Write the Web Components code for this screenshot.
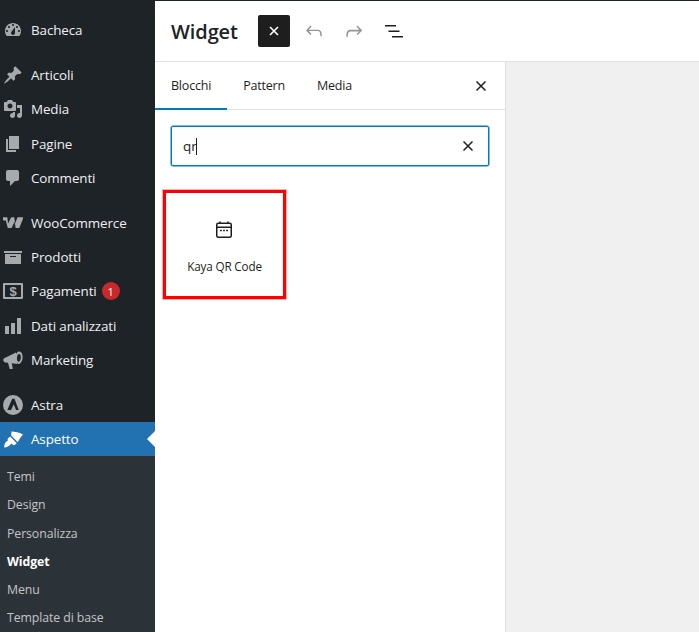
<!DOCTYPE html>
<html lang="it">
<head>
<meta charset="utf-8">
<title>Widget</title>
<style>
  html, body { margin: 0; height: 100%; overflow: hidden; }
  body { display: flex; height: 632px; font-family: "Open Sans", "Liberation Sans", sans-serif; }
</style>
</head>
<body>
<admin-menu>
  <menu-item icon="gauge" top>Bacheca</menu-item>
  <menu-item icon="pin" gap>Articoli</menu-item>
  <menu-item icon="media">Media</menu-item>
  <menu-item icon="page">Pagine</menu-item>
  <menu-item icon="comment">Commenti</menu-item>
  <menu-item icon="woo" gap>WooCommerce</menu-item>
  <menu-item icon="box">Prodotti</menu-item>
  <menu-item icon="money" badge="1">Pagamenti</menu-item>
  <menu-item icon="bars">Dati analizzati</menu-item>
  <menu-item icon="horn">Marketing</menu-item>
  <menu-item icon="astra" gap>Astra</menu-item>
  <menu-item icon="brush" current>Aspetto</menu-item>
  <sub-menu>
    <sub-item>Temi</sub-item>
    <sub-item>Design</sub-item>
    <sub-item>Personalizza</sub-item>
    <sub-item current>Widget</sub-item>
    <sub-item>Menu</sub-item>
    <sub-item>Template di base</sub-item>
  </sub-menu>
</admin-menu>
<widget-editor></widget-editor>

<script>
const icons = {
  gauge: `<path fill-rule="evenodd" d="M3.760 16h12.480c1.100-1.370 1.760-3.110 1.760-5 0-4.420-3.580-8-8-8s-8 3.580-8 8c0 1.890.660 3.630 1.760 5zM10 4c.550 0 1 .450 1 1s-.450 1-1 1-1-.450-1-1 .450-1 1-1zM6 6c.550 0 1 .450 1 1s-.450 1-1 1-1-.450-1-1 .450-1 1-1zm8 0c.550 0 1 .450 1 1s-.450 1-1 1-1-.450-1-1 .450-1 1-1zm-5.370 5.550L12 7v6c0 1.100-.900 2-2 2s-2-.900-2-2c0-.570.240-1.080.630-1.450zM4 10c.550 0 1 .450 1 1s-.450 1-1 1-1-.450-1-1 .450-1 1-1zm12 0c.550 0 1 .450 1 1s-.450 1-1 1-1-.450-1-1 .450-1 1-1z"/>`,
  pin: `<path d="M10.440 3.020l1.820-1.820 6.360 6.350-1.830 1.820c-1.050-.680-2.480-.570-3.410.360l-.750.750c-.920.930-1.040 2.350-.350 3.410l-1.830 1.820-2.410-2.410-2.800 2.790c-.420.420-3.380 2.710-3.800 2.290s1.860-3.390 2.280-3.810l2.790-2.790L4.100 9.360l1.830-1.820c1.050.690 2.480.570 3.400-.360l.750-.750c.930-.920 1.050-2.350.360-3.410z"/>`,
  media: `<path fill-rule="evenodd" d="M13 11V4c0-.550-.450-1-1-1h-1.670L9 1H5L3.670 3H2c-.550 0-1 .450-1 1v7c0 .550.450 1 1 1h10c.550 0 1-.450 1-1zM7 4.500c1.380 0 2.500 1.120 2.500 2.500S8.380 9.500 7 9.500 4.500 8.380 4.500 7 5.620 4.500 7 4.500z"/><path d="M14 6h5v10.500c0 1.380-1.120 2.500-2.500 2.500S14 17.880 14 16.500s1.120-2.500 2.500-2.500c.170 0 .340.020.5.050V9h-3V6zm-4 8.050V13h2v3.500c0 1.380-1.120 2.500-2.500 2.500S7 17.880 7 16.500 8.120 14 9.500 14c.170 0 .340.020.5.050z"/>`,
  page: `<path d="M6 15V2h10v13H6zm-1 1h8v2H3V5h2v11z"/>`,
  comment: `<path d="M5 2h9c1.100 0 2 .900 2 2v7c0 1.100-.900 2-2 2h-2l-5 5v-5H5c-1.100 0-2-.900-2-2V4c0-1.100.900-2 2-2z"/>`,
  woo: `<path d="M0 4.200h4.300l.8 6.300 3.100-6.300h3.100l.7 6.300 2.600-6.300h4.800c.8 0 .9.8.6 1.500l-3.700 9.300h-3.700l-1-6.200-3 6.200H4.800L2.900 7.700 0 7.300z"/>`,
  box: `<path fill-rule="evenodd" d="M19 4v2H1V4h18zM2 7h16v10H2V7zm11 3V9H7v1h6z"/>`,
  money: `<path fill-rule="evenodd" d="M1 2h18a1 1 0 0 1 1 1v14a1 1 0 0 1-1 1H1a1 1 0 0 1-1-1V3a1 1 0 0 1 1-1zM2 4v12h16V4z"/><text x="10" y="14.500" font-size="13" font-weight="700" text-anchor="middle" font-family="Liberation Sans, sans-serif">$</text>`,
  bars: `<path d="M18 18V2h-4v16h4zm-6 0V7H8v11h4zm-6 0v-8H2v8h4z"/>`,
  horn: `<path d="M1.200 8.200L13 2.500l1 11.500-5.200-.8 1 5.800H6.700L5 12.800l-2.600-.3a2.400 2.400 0 0 1-1.200-4.300z"/><path fill-rule="evenodd" d="M16.500 1.500c2.300.3 3.400 3.200 3.100 6.600-.3 3.400-2 6.100-4.200 5.800-2.300-.3-3.400-3.200-3.100-6.600.3-3.400 2-6.100 4.200-5.800zM16.200 4c-1.100-.1-2 1.600-2.200 3.700-.2 2.100.5 3.900 1.600 4 1.100.1 2-1.600 2.200-3.700.2-2.100-.5-3.900-1.600-4z"/>`,
  astra: `<path fill-rule="evenodd" d="M10 0a10 10 0 1 0 0 20 10 10 0 0 0 0-20zM9.200 3.800h2.300l4.200 11.200h-2.600l-2.300-5.700L8 15H4.300z"/>`,
  brush: `<path d="M8.500 2.500c3.500.4 7.500.6 11.500 3-2.500 2.500-3.800 5-5.200 7.800L8.200 6.600zM7.200 7.600l6.500 6.600-1.700 1.600c-.8.600-1.700.3-2.300-.3l-1.200-.9-2 2c-1.500 1.500-3.700 2-5.500 1.700l1-4.300 2.900-2.800c-.4-.8-.4-1.300.2-2z"/>`
};

class AdminMenu extends HTMLElement {
  constructor() {
    super();
    this.attachShadow({ mode: "open" }).innerHTML = `<style>
      :host { display: flex; flex-direction: column; width: 155px; flex: none; height: 632px;
        background: #1d2327; overflow: hidden; }
    </style><slot></slot>`;
  }
}

class MenuItem extends HTMLElement {
  constructor() {
    super();
    const badge = this.getAttribute("badge");
    const name = this.getAttribute("icon");
    this.attachShadow({ mode: "open" }).innerHTML = `<style>
      :host { display: flex; align-items: center; height: 34.250px; flex: none; position: relative;
        color: #f0f0f1; font-size: 13.400px; letter-spacing: -.1px; }
      :host([gap]) { margin-top: 10.750px; }
      :host([top]) { margin-top: 13px; }
      :host([current]) { background: #2271b1; color: #fff; }
      :host([current])::after { content: ""; position: absolute; right: 0; top: 50%; margin-top: -8px;
        border: 8px solid transparent; border-right-color: #fff; border-left-width: 0; }
      svg { width: 20px; height: 20px; margin-left: 3px; margin-right: 8px; flex: none; fill: #a7aaad; }
      :host([current]) svg { fill: #fff; }
      .badge { margin-left: 5px; width: 18px; height: 18px; border-radius: 50%; background: #c9282d;
        color: #fff; font-size: 11px; display: flex; align-items: center; justify-content: center; letter-spacing: 0; }
    </style>
    <svg viewBox="0 0 20 20">${icons[name]}</svg><slot></slot>
    ${badge ? `<span class="badge">${badge}</span>` : ""}`;
  }
}

class SubMenu extends HTMLElement {
  constructor() {
    super();
    this.attachShadow({ mode: "open" }).innerHTML = `<style>
      :host { display: flex; flex-direction: column; flex: 1; background: #2c3338; padding-top: 6.300px; }
    </style><slot></slot>`;
  }
}

class SubItem extends HTMLElement {
  constructor() {
    super();
    this.attachShadow({ mode: "open" }).innerHTML = `<style>
      :host { display: flex; align-items: center; height: 28.200px; flex: none; padding-left: 7px;
        color: #c3c4c7; font-size: 12.300px; letter-spacing: -.08px; }
      :host([current]) { color: #fff; font-weight: 700; }
    </style><slot></slot>`;
  }
}

class WidgetEditor extends HTMLElement {
  constructor() {
    super();
    this.attachShadow({ mode: "open" }).innerHTML = `<style>
      :host { display: flex; flex-direction: column; flex: 1; min-width: 0; background: #fff;
        border-top: 1px solid #1d2327; color: #1e1e1e; }
      header { display: flex; align-items: center; height: 60px; flex: none; padding-left: 16px;
        border-bottom: 1px solid #e0e0e0; }
      h1 { margin: 0; width: 87px; flex: none; font-size: 20px; font-weight: 600; letter-spacing: -.1px; color: #1d2327; }
      .close { width: 32px; height: 32px; background: #1e1e1e; border-radius: 2px; display: flex;
        align-items: center; justify-content: center; }
      header svg.t { width: 24px; height: 24px; margin-left: 16px; flex: none; }
      header svg.undo { margin-left: 12px; }
      header svg.list { margin-left: 16px; }
      .body { flex: 1; display: flex; min-height: 0; }
      .panel { width: 350px; flex: none; border-right: 1px solid #e0e0e0; box-sizing: content-box; }
      .canvas { flex: 1; background: #f0f0f0; }
      nav { display: flex; height: 47px; border-bottom: 1px solid #e0e0e0; align-items: center; position: relative;
        font-size: 12.500px; letter-spacing: -.2px; padding-left: 16px; gap: 32px; }
      nav span { position: relative; }
      nav .x { position: absolute; right: 12px; top: 12px; width: 24px; height: 24px; }
      nav i { position: absolute; left: 0; bottom: -1px; width: 72px; height: 2px; background: #007cba; }
      .search { margin: 16px 16px 0 16px; height: 38px; border: 1px solid #007cba; border-radius: 2px;
        box-shadow: 0 0 0 .5px #007cba; display: flex; align-items: center; padding-left: 11px;
        font-size: 13.500px; position: relative; }
      .search b { display: inline-block; width: 1px; height: 17px; background: #1e1e1e; margin-left: -1px; }
      .search svg { position: absolute; right: 8px; top: 7px; width: 24px; height: 24px; }
      .hit { margin: 24px 0 0 8px; width: 117px; height: 103px; border: 3px solid #f00; display: flex;
        flex-direction: column; align-items: center; font-size: 11.700px; letter-spacing: -.15px; outline: 1px solid rgba(255,0,0,.3); }
      .hit svg { width: 24px; height: 24px; margin: 25px 1px 0 0; }
      .hit span { margin-top: 16px; }
    </style>
    <header>
      <h1>Widget</h1>
      <div class="close"><svg width="24" height="24" viewBox="0 0 24 24"><path d="M8 8l8 8M16 8l-8 8" stroke="#fff" stroke-width="1.600" fill="none"/></svg></div>
      <svg class="t undo" viewBox="0 0 24 24" fill="#949494"><path d="M18.300 11.700c-.6-.6-1.400-.9-2.300-.9H6.700l2.900-3.300-1.100-1-4.500 5L8.500 16l1-1-2.700-3H16c.5 0 .9.200 1.300.5 1 1 1 3.400 1 4.500v.3h1.500v-.2c0-1.500 0-4.300-1.500-5.700z"/></svg>
      <svg class="t redo" viewBox="0 0 24 24" fill="#949494"><path d="M15.600 6.500l-1.100 1 2.900 3.300H8c-.9 0-1.700.3-2.300.9-1.400 1.500-1.400 4.200-1.400 5.800v.2h1.500v-.3c0-1.100 0-3.500 1-4.500.3-.3.7-.5 1.300-.5h9.200L14.500 15l1.100 1.100 4.600-4.600-4.600-5z"/></svg>
      <svg class="t list" viewBox="0 0 24 24" fill="#1e1e1e"><path d="M3 6h11v1.500H3V6zm3.500 5.500h11V13h-11v-1.500zM21 17H10v1.500h11V17z"/></svg>
    </header>
    <div class="body">
      <section class="panel">
        <nav>
          <span>Blocchi</span><span>Pattern</span><span>Media</span><i></i>
          <svg class="x" viewBox="0 0 24 24"><path d="M7.500 7.500l9 9M16.500 7.500l-9 9" stroke="#1e1e1e" stroke-width="1.500" fill="none"/></svg>
        </nav>
        <div class="search">qr<b></b>
          <svg viewBox="0 0 24 24"><path d="M7.500 7.500l9 9M16.500 7.500l-9 9" stroke="#1e1e1e" stroke-width="1.500" fill="none"/></svg>
        </div>
        <div class="hit">
          <svg viewBox="0 0 24 24" fill="none" stroke="#1e1e1e" stroke-width="1.500"><rect x="4.750" y="5.250" width="14.500" height="14" rx="1.500"/><path d="M4.750 9.250h14.500M8 3.500v2M16 3.500v2"/><path d="M8 12.500h1.800M11.100 12.500h1.800M14.200 12.500h1.800" stroke-width="1.700"/></svg>
          <span>Kaya QR Code</span>
        </div>
      </section>
      <div class="canvas"></div>
    </div>`;
  }
}

customElements.define("admin-menu", AdminMenu);
customElements.define("menu-item", MenuItem);
customElements.define("sub-menu", SubMenu);
customElements.define("sub-item", SubItem);
customElements.define("widget-editor", WidgetEditor);
</script>
</body>
</html>
